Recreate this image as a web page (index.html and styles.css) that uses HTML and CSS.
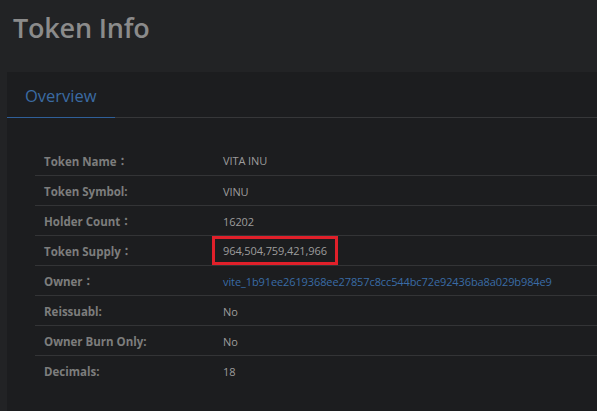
FILE: index.html
```html
<!DOCTYPE html>
<html lang="en">
<head>
  <meta charset="UTF-8" />
  <meta name="viewport" content="width=device-width, initial-scale=1.0"/>
  <title>Token Info</title>
  <link rel="stylesheet" href="styles.css">
</head>
<body>

  <h1 class="page-title">Token Info</h1>

  <div class="card">
    <div class="card-header">
      <span class="card-title">Overview</span>
    </div>

    <div class="card-body">
      <table class="info-table">
        <tr>
          <td class="info-label">Token Name：</td>
          <td>VITA INU</td>
        </tr>
        <tr>
          <td class="info-label">Token Symbol:</td>
          <td>VINU</td>
        </tr>
        <tr>
          <td class="info-label">Holder Count：</td>
          <td>16202</td>
        </tr>
        <tr>
          <td class="info-label">Token Supply：</td>
          <td><span class="highlight">964,504,759,421,966</span></td>
        </tr>
        <tr>
          <td class="info-label">Owner：</td>
          <td><a class="addr" href="#">vite_1b91ee2619368ee27857c8cc544bc72e92436ba8a029b984e9</a></td>
        </tr>
        <tr>
          <td class="info-label">Reissuabl:</td>
          <td>No</td>
        </tr>
        <tr>
          <td class="info-label">Owner Burn Only:</td>
          <td>No</td>
        </tr>
        <tr>
          <td class="info-label">Decimals:</td>
          <td>18</td>
        </tr>
      </table>
    </div>
  </div>

</body>
</html>
```

FILE: styles.css
```css
* {
  box-sizing: border-box;
  margin: 0;
  padding: 0;
  font-family: "Open Sans", "Noto Sans CJK TC", sans-serif;
}

body {
  background-color: #222325;
  color: #9a9a9a;
  height: 100vh;
  overflow: hidden;
}

.page-title {
  height: 72px;
  padding: 9px 0 0 13px;
  font-size: 27px;
  font-weight: 600;
  color: #8b8b8b;
  letter-spacing: -0.2px;
}

.card {
  margin-left: 7px;
  background-color: #1c1d1f;
  height: 339px;
}

.card-header {
  height: 46px;
  padding: 12px 0 0 18px;
  border-bottom: 1px solid #363739;
  position: relative;
}

/* active tab underline */
.card-header::after {
  content: "";
  position: absolute;
  left: 0;
  bottom: -1px;
  width: 108px;
  height: 1px;
  background-color: #2f5f98;
}

.card-title {
  font-size: 16.5px;
  color: #3b6ba3;
}

.card-body {
  padding: 27px 0 0 28px;
}

.info-table {
  width: 100%;
  border-collapse: collapse;
}

.info-table tr {
  height: 30px;
  border-bottom: 1px solid #333436;
}

.info-table tr:last-child {
  border-bottom: none;
}

.info-table td {
  padding-top: 2px;
  font-size: 11px;
  letter-spacing: -0.1px;
  color: #9c9c9c;
  white-space: nowrap;
  vertical-align: middle;
}

.info-table .info-label {
  width: 188px;
  padding-left: 9px;
  font-size: 11.5px;
  letter-spacing: 0;
  font-weight: 700;
  color: #7d7d7d;
}

.highlight {
  display: inline-block;
  margin: -2px 0 0 -11px;
  padding: 4px 8px;
  border: 3px solid #e0202a;
}

.addr {
  color: #3a6ca6;
  text-decoration: none;
}
```
